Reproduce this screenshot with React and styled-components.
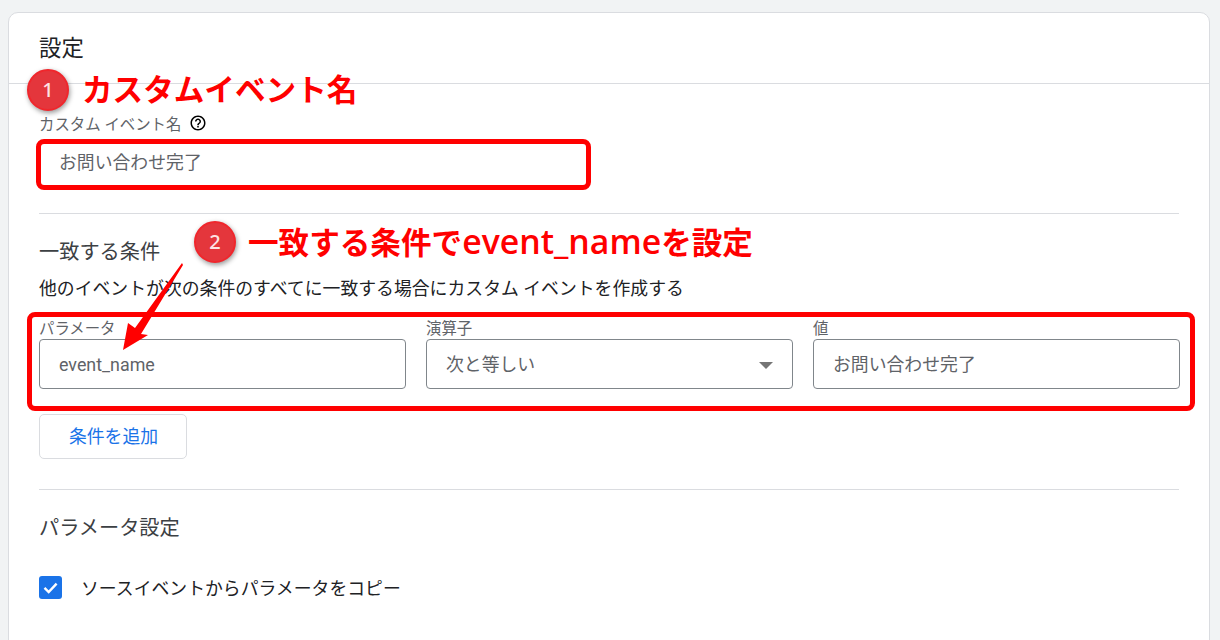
import React from "react";
import styled, { createGlobalStyle } from "styled-components";
import { MdOutlineHelpOutline } from "react-icons/md";

const FONT = `Roboto, "Noto Sans CJK JP", sans-serif`;

const GlobalStyle = createGlobalStyle`
  html, body {
    margin: 0;
    height: 640px;
    overflow: hidden;
    background: #f1f3f4;
    font-family: ${FONT};
  }
`;

const App = () => (
  <Page>
    <GlobalStyle />
    <Card>
      <CardHeader>設定</CardHeader>
      <CardBody>
        <NameField>
          <FieldLabel>
            カスタム イベント名
            <HelpIcon />
          </FieldLabel>
          <NameBox>お問い合わせ完了</NameBox>
        </NameField>
        <Divider $top={25} />
        <SectionTitle>一致する条件</SectionTitle>
        <Description>
          他のイベントが次の条件のすべてに一致する場合にカスタム イベントを作成する
        </Description>
        <ConditionRow>
          <Field>
            <SmallLabel>パラメータ</SmallLabel>
            <TextBox>event_name</TextBox>
          </Field>
          <Field>
            <SmallLabel>演算子</SmallLabel>
            <TextBox>
              次と等しい
              <Caret />
            </TextBox>
          </Field>
          <Field>
            <SmallLabel>値</SmallLabel>
            <TextBox>お問い合わせ完了</TextBox>
          </Field>
        </ConditionRow>
        <AddButton>条件を追加</AddButton>
        <Divider $top={30} />
        <SectionTitle>パラメータ設定</SectionTitle>
        <CheckRow>
          <CheckBox>
            <svg width="17" height="17" viewBox="0 0 17 17">
              <path d="M2.5 8.8 L6.7 13 L14.6 4.6" fill="none" stroke="#fff" strokeWidth="2.4" />
            </svg>
          </CheckBox>
          ソースイベントからパラメータをコピー
        </CheckRow>
      </CardBody>
    </Card>

    <Frame $x={36} $y={139} $w={555} $h={51} />
    <Frame $x={27} $y={312} $w={1168} $h={99} />

    <Badge $x={27} $y={69}>1</Badge>
    <Callout $x={82} $y={67}>カスタムイベント名</Callout>
    <Badge $x={194} $y={221}>2</Badge>
    <Callout $x={248} $y={219}>
      一致する条件で<Latin>event_name</Latin>を設定
    </Callout>
    <Arrow width="70" height="100" viewBox="0 0 70 100">
      <polygon points="59,1 60,3 18,72 25,73 0,88 5,61 12,66" fill="#ff0000" />
    </Arrow>
  </Page>
);

const Page = styled.div`
  position: relative;
  height: 640px;
  overflow: hidden;
  box-sizing: border-box;
  padding: 12px 10px 0 8px;
`;

const Card = styled.section`
  background: #fff;
  border: 1px solid #dadce0;
  border-radius: 10px;
  height: 700px;
  color: #202124;
`;

const CardHeader = styled.h2`
  margin: 0;
  box-sizing: border-box;
  height: 71px;
  padding: 19px 30px 0;
  border-bottom: 1px solid #dadce0;
  font-size: 22.4px;
  font-weight: 400;
  line-height: 32px;
`;

const CardBody = styled.div`
  padding: 29px 30px 0;
`;

const Field = styled.div`
  flex: 1;
  min-width: 0;
`;

const NameField = styled.div`
  width: 550px;
`;

const FieldLabel = styled.div`
  display: flex;
  align-items: center;
  height: 20px;
  margin-bottom: 7px;
  font-size: 15.4px;
  color: #5f6368;
`;

const HelpIcon = styled(MdOutlineHelpOutline)`
  margin-left: 8px;
  width: 18px;
  height: 18px;
  color: #000;
`;

const SmallLabel = styled.div`
  height: 17px;
  font-size: 15.4px;
  line-height: 15px;
  color: #5f6368;
`;

const TextBox = styled.div`
  position: relative;
  box-sizing: border-box;
  height: 50px;
  padding: 0 19px;
  border: 1px solid #80868b;
  border-radius: 4px;
  background: #fff;
  font-size: 17.85px;
  line-height: 50px;
  color: #5f6368;
`;

const NameBox = styled(TextBox)`
  height: 48px;
  line-height: 44px;
`;

const Caret = styled.span`
  position: absolute;
  top: 22px;
  right: 19px;
  border-left: 7px solid transparent;
  border-right: 7px solid transparent;
  border-top: 7px solid #757575;
`;

const Divider = styled.hr`
  margin: ${(p) => p.$top}px 0 0;
  border: 0;
  border-top: 1px solid #dadce0;
`;

const SectionTitle = styled.h3`
  margin: 23px 0 0;
  font-size: 20.2px;
  font-weight: 400;
  line-height: 30px;
  color: #3c4043;
`;

const Description = styled.p`
  margin: 9px 0 0;
  font-size: 17.85px;
  line-height: 26px;
  color: #202124;
`;

const ConditionRow = styled.div`
  display: flex;
  gap: 20px;
  margin: 20px -1px 0 0;
`;

const AddButton = styled.button`
  display: block;
  width: 148px;
  height: 45px;
  margin-top: 25px;
  padding: 0 0 3px 1px;
  background: #fff;
  border: 1px solid #dadce0;
  border-radius: 5px;
  font-family: ${FONT};
  font-size: 17.85px;
  color: #1a73e8;
`;

const CheckRow = styled.label`
  display: flex;
  align-items: center;
  gap: 19px;
  margin-top: 31px;
  font-size: 17.85px;
  color: #202124;
`;

const CheckBox = styled.span`
  display: flex;
  align-items: center;
  justify-content: center;
  width: 23px;
  height: 23px;
  border-radius: 3px;
  background: #1a73e8;
`;

/* annotations drawn over the screenshot */
const Frame = styled.div`
  position: absolute;
  left: ${(p) => p.$x}px;
  top: ${(p) => p.$y}px;
  width: ${(p) => p.$w}px;
  height: ${(p) => p.$h}px;
  box-sizing: border-box;
  border: 5px solid #ff0000;
  border-radius: 8px;
`;

const Badge = styled.div`
  position: absolute;
  left: ${(p) => p.$x}px;
  top: ${(p) => p.$y}px;
  box-sizing: border-box;
  width: 42px;
  height: 42px;
  border: 2px solid #f0262c;
  border-radius: 50%;
  background: #e4363c;
  box-shadow: 1px 2px 5px rgba(0, 0, 0, 0.4);
  color: #fde3e3;
  font-family: "Noto Sans", sans-serif;
  font-size: 20px;
  font-weight: 500;
  line-height: 38px;
  text-align: center;
`;

const Callout = styled.div`
  position: absolute;
  left: ${(p) => p.$x}px;
  top: ${(p) => p.$y}px;
  font-family: "Open Sans", "Noto Sans CJK JP", sans-serif;
  font-size: 30.6px;
  font-weight: 700;
  line-height: 44px;
  white-space: nowrap;
  color: #ff0000;
`;

const Latin = styled.span`
  font-size: 33.8px;
  font-weight: 600;
`;

const Arrow = styled.svg`
  position: absolute;
  left: 123px;
  top: 262px;
`;

export default App;
